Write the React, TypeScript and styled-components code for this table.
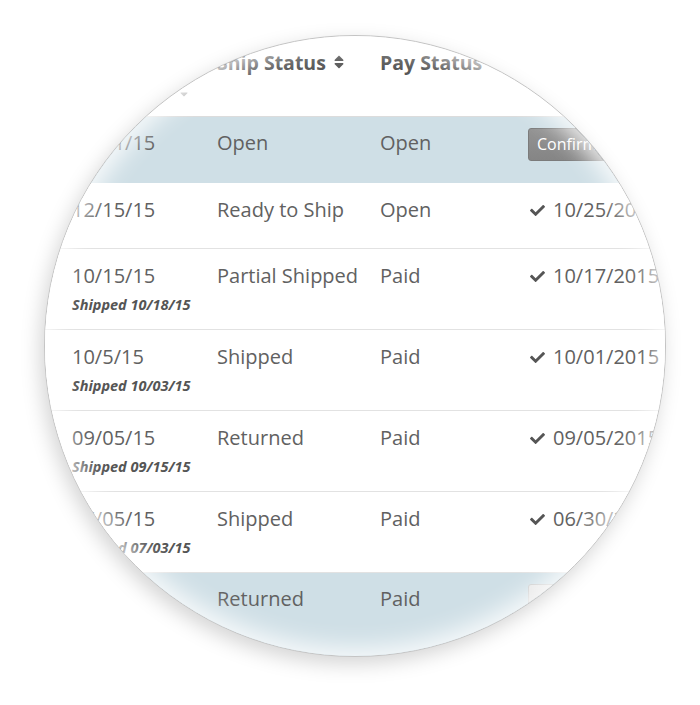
import styled, { createGlobalStyle } from 'styled-components';
import { FaCheck, FaSort, FaCaretDown } from 'react-icons/fa';

type Order = {
  date: string;
  shipped?: string;
  ship: string;
  pay: string;
  confirmed?: string;
  action?: 'confirm' | 'disabled';
  highlight?: boolean;
};

const orders: Order[] = [
  { date: '12/21/15', ship: 'Open', pay: 'Open', action: 'confirm', highlight: true },
  { date: '12/15/15', ship: 'Ready to Ship', pay: 'Open', confirmed: '10/25/2015' },
  { date: '10/15/15', shipped: '10/18/15', ship: 'Partial Shipped', pay: 'Paid', confirmed: '10/17/2015' },
  { date: '10/5/15', shipped: '10/03/15', ship: 'Shipped', pay: 'Paid', confirmed: '10/01/2015' },
  { date: '09/05/15', shipped: '09/15/15', ship: 'Returned', pay: 'Paid', confirmed: '09/05/2015' },
  { date: '07/05/15', shipped: '07/03/15', ship: 'Shipped', pay: 'Paid', confirmed: '06/30/2015' },
  { date: '06/12/15', ship: 'Returned', pay: 'Paid', action: 'disabled', highlight: true },
];

function App() {
  return (
    <Page>
      <GlobalStyle />
      <Lens>
        <HeaderRow>
          <HeadCell>
            Order Date
            <Caret>
              <FaCaretDown size={12} />
            </Caret>
          </HeadCell>
          <HeadCell>
            Ship Status
            <SortIcon>
              <FaSort size={16} />
            </SortIcon>
          </HeadCell>
          <HeadCell>Pay Status</HeadCell>
          <HeadCell>Confirmed</HeadCell>
        </HeaderRow>

        {orders.map((o, i) => (
          <Row key={i} highlight={o.highlight} tall={!!o.shipped}>
            <Cell>
              {o.date}
              {o.shipped && <Sub>Shipped {o.shipped}</Sub>}
            </Cell>
            <Cell>{o.ship}</Cell>
            <Cell>{o.pay}</Cell>
            <Cell>
              {o.confirmed && (
                <Confirmed>
                  <FaCheck size={15} />
                  {o.confirmed}
                </Confirmed>
              )}
              {o.action && <Button disabled={o.action === 'disabled'}>Confirm</Button>}
            </Cell>
          </Row>
        ))}
      </Lens>
    </Page>
  );
}

type RowProps = {
  highlight?: boolean;
  tall?: boolean;
};

const GlobalStyle = createGlobalStyle`
  html, body {
    margin: 0;
    padding: 0;
    background: #ffffff;
  }
  * {
    box-sizing: border-box;
  }
`;

const Page = styled.div`
  width: 700px;
  height: 705px;
  padding: 35px 0 0 44px;
  font-family: 'Open Sans', 'DejaVu Sans', sans-serif;
  overflow: hidden;
`;

const Lens = styled.div`
  position: relative;
  width: 622px;
  height: 622px;
  border-radius: 50%;
  overflow: hidden;
  background: #fff;
  border: 1px solid #c4c4c4;
  box-shadow: -4px 7px 20px rgba(0, 0, 0, 0.17);

  &::after {
    content: '';
    position: absolute;
    inset: 0;
    border-radius: 50%;
    box-shadow: inset 0 0 24px 8px rgba(255, 255, 255, 0.85);
    pointer-events: none;
  }
`;

const Columns = styled.div`
  display: grid;
  grid-template-columns: 145px 163px 148px 1fr;
  padding-left: 27px;
`;

const HeaderRow = styled(Columns)`
  height: 81px;
  padding-top: 14px;
  border-bottom: 1px solid #dcdcdc;
`;

const HeadCell = styled.div`
  position: relative;
  display: flex;
  align-items: center;
  gap: 5px;
  height: 24px;
  font-size: 19.5px;
  font-weight: 700;
  color: #555;
  white-space: nowrap;
`;

const Caret = styled.span`
  position: absolute;
  left: 106px;
  top: 38px;
  color: #aaa;
  display: flex;
`;

const SortIcon = styled.span`
  display: flex;
  color: #5a5a5a;
`;

const Row = styled(Columns)<RowProps>`
  height: ${(p) => (p.tall ? '81px' : '66px')};
  padding-top: ${(p) => (p.highlight ? '14px' : '15px')};
  background: ${(p) => (p.highlight ? '#cfdfe6' : '#fff')};
  border-bottom: 1px solid ${(p) => (p.highlight ? '#cfdfe6' : '#e2e2e2')};
  &:last-child {
    height: 140px;
  }
`;

const Cell = styled.div`
  font-size: 20px;
  line-height: 24px;
  color: #616161;
  white-space: nowrap;
`;

const Sub = styled.div`
  margin-top: 8px;
  font-size: 14.5px;
  line-height: 18px;
  font-weight: 700;
  font-style: italic;
  color: #555;
`;

const Confirmed = styled.span`
  display: inline-flex;
  align-items: center;
  gap: 8px;
  padding-left: 2px;
  svg {
    color: #555;
  }
`;

const Button = styled.span<{ disabled?: boolean }>`
  display: inline-block;
  margin-top: -3px;
  padding: 4px 8px;
  font-size: 16px;
  line-height: 23px;
  border-radius: 3px;
  color: #fff;
  background: ${(p) =>
    p.disabled ? 'linear-gradient(#e6e6e6, #cfcfcf)' : 'linear-gradient(#939393, #858585)'};
  border: 1px solid ${(p) => (p.disabled ? '#c8c8c8' : '#7b7b7b')};
`;

export default App;
